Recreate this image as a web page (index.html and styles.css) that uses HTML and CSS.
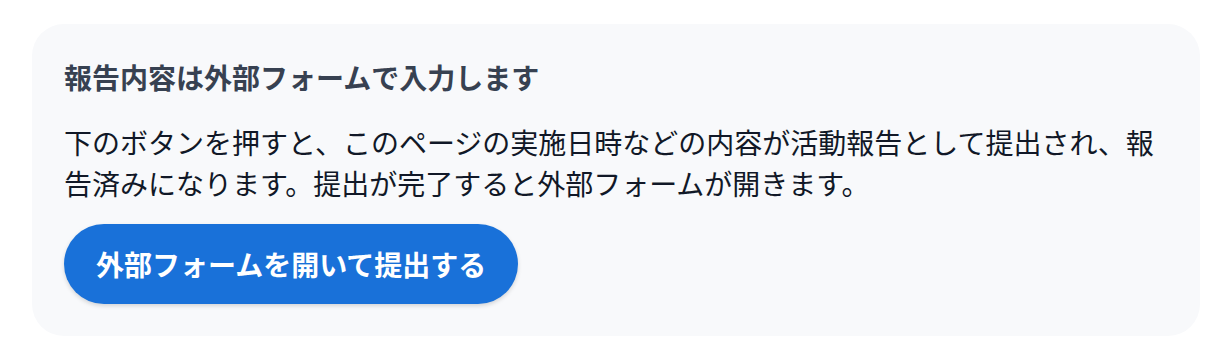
FILE: index.html
```html
<!DOCTYPE html>
<html lang="ja">
<head>
    <meta charset="UTF-8">
    <title>活動報告</title>
    <link rel="stylesheet" href="styles.css">
</head>
<body>
    <div class="report-box">
        <h2 class="report-title">報告内容は外部フォームで入力します</h2>
        <p class="report-text">下のボタンを押すと、このページの実施日時などの内容が活動報告として提出され、報告済みになります。提出が完了すると外部フォームが開きます。</p>
        <button type="button" class="submit-btn">外部フォームを開いて提出する</button>
    </div>
</body>
</html>
```

FILE: styles.css
```css
body {
    margin: 0;
    padding: 24px 32px;
    background: #fff;
    font-family: "Noto Sans CJK JP", "Noto Sans", sans-serif;
}
.report-box {
    background: #f8f9fb;
    border-radius: 32px;
    padding: 32px;
    display: flex;
    flex-direction: column;
    align-items: flex-start;
}
.report-title {
    margin: 0 0 24px;
    font-size: 28px;
    line-height: 42px;
    font-weight: bold;
    color: #374151;
}
.report-text {
    margin: 0 0 20px;
    font-size: 28px;
    line-height: 41px;
    color: #111827;
}
.submit-btn {
    background: #1971d9;
    color: #fff;
    border: none;
    border-radius: 40px;
    height: 80px;
    padding: 0 32px;
    font-family: inherit;
    font-size: 28px;
    font-weight: bold;
    cursor: pointer;
    box-shadow: 0 2px 4px rgba(0, 0, 0, 0.15);
}
.submit-btn:hover {
    background: #1560bd;
}
```
